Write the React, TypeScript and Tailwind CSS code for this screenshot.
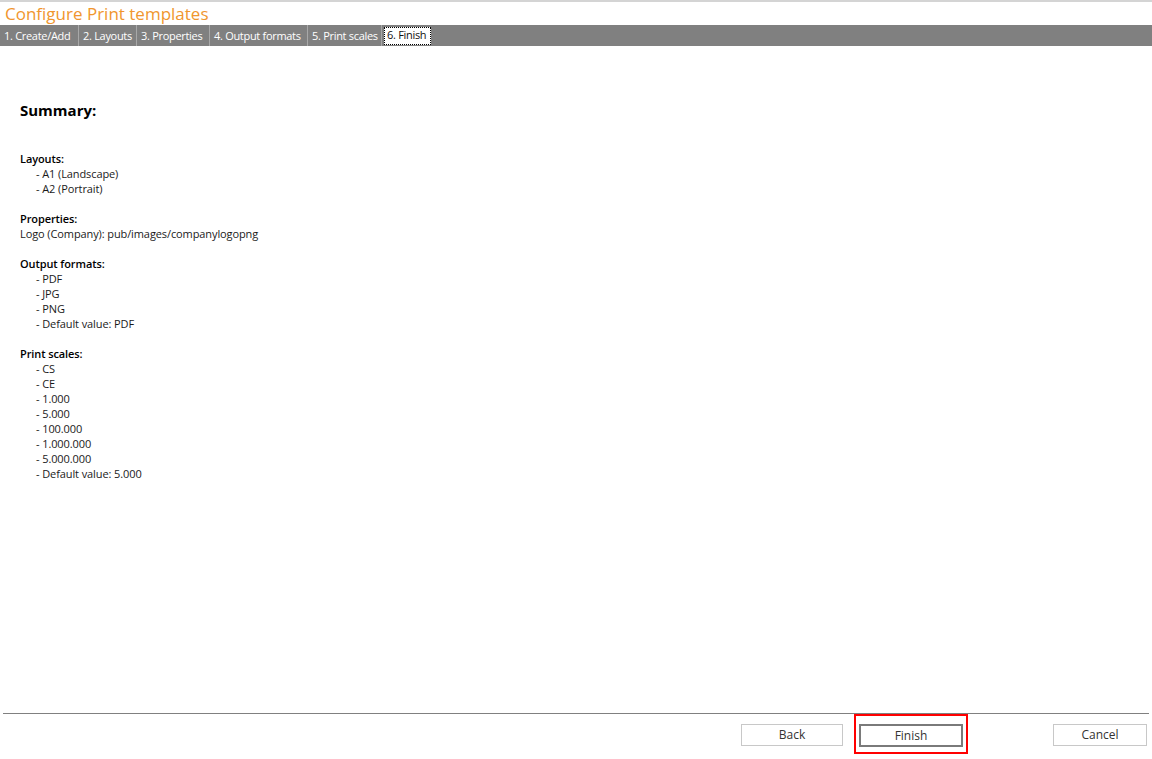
import React from "react";

const tabs = [
  { label: "1. Create/Add", w: "w-[79px]" },
  { label: "2. Layouts", w: "w-[58px]" },
  { label: "3. Properties", w: "w-[73px]" },
  { label: "4. Output formats", w: "w-[98px]" },
  { label: "5. Print scales", w: "w-[74px]" },
];

const sections: { title: string; items?: string[]; text?: string }[] = [
  { title: "Layouts:", items: ["A1 (Landscape)", "A2 (Portrait)"] },
  { title: "Properties:", text: "Logo (Company): pub/images/companylogopng" },
  { title: "Output formats:", items: ["PDF", "JPG", "PNG", "Default value: PDF"] },
  {
    title: "Print scales:",
    items: ["CS", "CE", "1.000", "5.000", "100.000", "1.000.000", "5.000.000", "Default value: 5.000"],
  },
];

export default function App() {
  return (
    <div
      className="w-[1152px] h-[759px] bg-white flex flex-col overflow-hidden text-[#1a1a1a]"
      style={{ fontFamily: '"Open Sans", "Noto Sans", sans-serif' }}
    >
      {/* Header */}
      <div className="h-[2px] bg-[#d4d4d4]" />
      <div className="h-[23px] pl-[5px] text-[17px] leading-[23px] text-[#f0962e]">
        Configure Print templates
      </div>
      <div className="h-[21px] bg-[#808080] flex items-center text-[11px] text-white tracking-[-0.3px]">
        {tabs.map((t) => (
          <div key={t.label} className={`${t.w} h-full flex items-center border-r border-[#a8a8a8] pl-[4px] whitespace-nowrap`}>
            <span className="leading-none">{t.label}</span>
          </div>
        ))}
        <div className="ml-[2px] h-[18px] w-[47px] bg-white text-[#111] border border-dotted border-black flex items-center pl-[2px] whitespace-nowrap">
          6. Finish
        </div>
      </div>

      {/* Summary */}
      <div className="flex-1 pl-[20px] pt-[54px] text-[11px] leading-[15px] tracking-[-0.1px]">
        <h1 className="text-[15px] font-bold leading-[20px] text-black tracking-normal">Summary:</h1>
        <div className="mt-[31px] flex flex-col gap-[15px]">
          {sections.map((s) => (
            <div key={s.title}>
              <p className="font-semibold text-black">{s.title}</p>
              {s.text && <p>{s.text}</p>}
              {s.items?.map((it) => (
                <p key={it} className="pl-[16px]">- {it}</p>
              ))}
            </div>
          ))}
        </div>
      </div>

      {/* Footer */}
      <div className="mx-[3px] h-px bg-[#808080]" />
      <div className="h-[45px] flex items-start text-[12px] text-[#333]">
        <div className="ml-[741px] mt-[10px] w-[102px] h-[22px] border border-[#c8c8c8] flex items-center justify-center">
          Back
        </div>
        <div className="ml-[11px] w-[114px] h-[40px] border-2 border-[#ff0000] flex justify-center pt-[8px]">
          <div className="w-[104px] h-[23px] border-2 border-[#7a7a7a] flex items-center justify-center">
            Finish
          </div>
        </div>
        <div className="ml-[85px] mt-[10px] w-[94px] h-[22px] border border-[#c8c8c8] flex items-center justify-center">
          Cancel
        </div>
      </div>
    </div>
  );
}
